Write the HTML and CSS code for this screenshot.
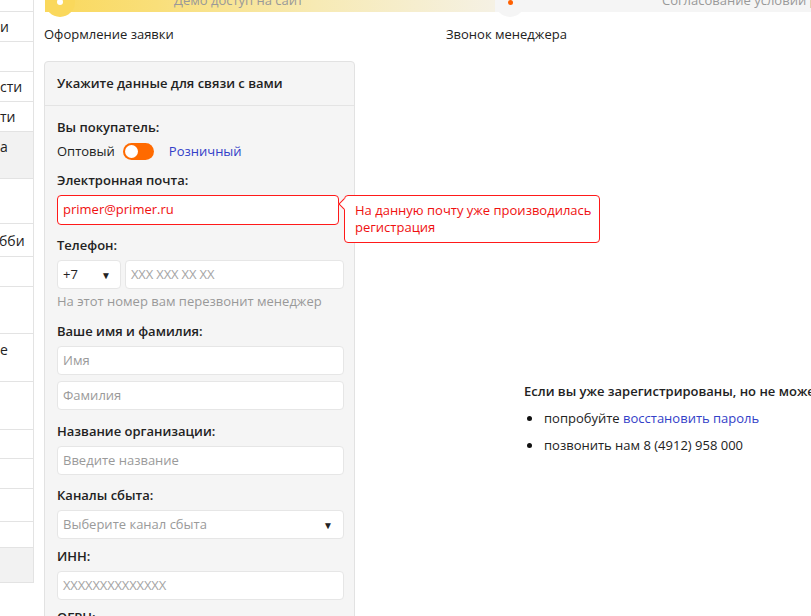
FILE: index.html
```html
<!DOCTYPE html>
<html lang="ru">
<head>
<meta charset="utf-8">
<title>Оформление заявки</title>
<link rel="stylesheet" href="styles.css">
</head>
<body>
<div class="page">
  <aside class="sidebar">
    <div class="side-row h30"></div>
    <div class="side-row h30"><span>и</span></div>
    <div class="side-row h30"></div>
    <div class="side-row h30"><span>сти</span></div>
    <div class="side-row h30"><span>ти</span></div>
    <div class="side-row h47 active"><span>а</span></div>
    <div class="side-row h45"></div>
    <div class="side-row h33"><span>бби</span></div>
    <div class="side-row h30"></div>
    <div class="side-row h47"></div>
    <div class="side-row h48"><span>е</span></div>
    <div class="side-row h48"></div>
    <div class="side-row h29"></div>
    <div class="side-row h30"></div>
    <div class="side-row h33"></div>
    <div class="side-row h26"></div>
    <div class="side-row h35 active"></div>
  </aside>

  <main class="main">
    <div class="progress">
      <div class="step step-done">
        <div class="circle circle-yellow"><span class="dot dot-white"></span></div>
        <div class="step-title step-title-1">Демо доступ на сайт</div>
      </div>
      <div class="step step-next">
        <div class="circle circle-gray"><span class="dot dot-orange"></span></div>
        <div class="step-title step-title-2">Согласование условий работы</div>
      </div>
    </div>

    <div class="step-labels">
      <div class="step-label first">Оформление заявки</div>
      <div class="step-label">Звонок менеджера</div>
    </div>

    <div class="content">
      <section class="card">
        <header class="card-head">Укажите данные для связи с вами</header>
        <div class="card-body">
          <div class="label">Вы покупатель:</div>
          <div class="switch-row">
            <span>Оптовый</span>
            <span class="toggle"><span class="knob"></span></span>
            <a class="link switch-link">Розничный</a>
          </div>

          <div class="label gap">Электронная почта:</div>
          <div class="email-wrap">
            <div class="input input-error">primer@primer.ru</div>
            <div class="tooltip">На данную почту уже производилась регистрация</div>
          </div>

          <div class="label gap">Телефон:</div>
          <div class="phone-row">
            <div class="input select phone-code"><span>+7</span><span class="arrow">▼</span></div>
            <div class="input placeholder narrow phone-num">XXX XXX XX XX</div>
          </div>
          <div class="hint">На этот номер вам перезвонит менеджер</div>

          <div class="label gap-lg">Ваше имя и фамилия:</div>
          <div class="input placeholder">Имя</div>
          <div class="input placeholder stack">Фамилия</div>

          <div class="label gap-lg">Название организации:</div>
          <div class="input placeholder">Введите название</div>

          <div class="label gap">Каналы сбыта:</div>
          <div class="input select placeholder"><span>Выберите канал сбыта</span><span class="arrow dark">▼</span></div>

          <div class="label gap-sm">ИНН:</div>
          <div class="input placeholder narrow inn">XXXXXXXXXXXXXX</div>

          <div class="label gap-sm">ОГРН:</div>
          <div class="input placeholder narrow">XXXXXXXXXXXXX</div>
        </div>
      </section>

      <section class="info">
        <div class="info-title">Если вы уже зарегистрированы, но не можете войти:</div>
        <ul class="info-list">
          <li>попробуйте <a class="link">восстановить пароль</a></li>
          <li>позвонить нам 8 (4912) 958 000</li>
        </ul>
      </section>
    </div>
  </main>
</div>
</body>
</html>
```

FILE: styles.css
```css
html {
  overflow: hidden;
}

body {
  margin: 0;
  font-family: "Open Sans", "Noto Sans", sans-serif;
  font-size: 13px;
  line-height: 18px;
  color: #222;
  background: #fff;
}

.page {
  display: flex;
  align-items: flex-start;
  width: 811px;
  height: 616px;
  overflow: hidden;
}

/* ---------- sidebar ---------- */
.sidebar {
  flex: 0 0 34px;
  width: 34px;
  margin-top: -18px;
  border-right: 1px solid #e3e3e3;
  box-sizing: border-box;
  overflow: hidden;
}

.side-row {
  box-sizing: border-box;
  border-bottom: 1px solid #e3e3e3;
  padding-top: 6px;
  font-size: 14px;
  line-height: 18px;
  color: #222;
  white-space: nowrap;
}

.side-row span {
  display: block;
  margin-left: -1px;
}

.side-row.active {
  background: #f2f2f2;
}

.h26 { height: 26px; }
.h29 { height: 29px; }
.h30 { height: 30px; }
.h33 { height: 33px; padding-top: 8px; }
.h35 { height: 35px; }
.h45 { height: 45px; }
.h47 { height: 47px; }
.h48 { height: 48px; padding-top: 7px; }

.h30 span, .h47 span, .h48 span {
  margin-left: 0;
}

/* ---------- main ---------- */
.main {
  flex: 1;
  min-width: 0;
  padding-left: 10px;
}

.progress {
  display: flex;
  height: 30px;
  margin-top: -18px;
  margin-left: 1px;
}

.step {
  display: flex;
  align-items: flex-start;
  height: 30px;
}

.step-done {
  flex: 0 0 450px;
  background: linear-gradient(90deg, #fad85c 0%, #f9df7a 25%, #f7eab4 60%, #f5f1e4 100%);
}

.step-next {
  flex: 1;
  background: #f5f5f5;
}

.circle {
  flex: 0 0 30px;
  width: 30px;
  height: 30px;
  margin-top: 5px;
  border-radius: 50%;
  display: flex;
  align-items: center;
  justify-content: center;
}

.circle-yellow {
  background: #fad85c;
}

.circle-gray {
  background: #f5f5f5;
}

.dot {
  width: 6px;
  height: 6px;
  border-radius: 50%;
}

.dot-white {
  background: #fff;
}

.dot-orange {
  width: 5px;
  height: 5px;
  background: #ff6000;
}

.step-title {
  margin-top: 3px;
  font-size: 13px;
  line-height: 30px;
  color: #999;
  white-space: nowrap;
}

.step-title-1 {
  margin-left: 99px;
}

.step-title-2 {
  margin-left: 137px;
}

.step-labels {
  display: flex;
  margin-top: 12px;
  font-size: 13px;
  line-height: 20px;
  color: #222;
}

.step-label.first {
  width: 402px;
}

.content {
  display: flex;
  align-items: flex-start;
  margin-top: 17px;
}

/* ---------- card ---------- */
.card {
  flex: 0 0 311px;
  width: 311px;
  box-sizing: border-box;
  background: #f5f5f5;
  border: 1px solid #e2e2e2;
  border-radius: 4px;
}

.card-head {
  height: 44px;
  box-sizing: border-box;
  padding: 0 12px;
  line-height: 43px;
  font-weight: 600;
  border-bottom: 1px solid #e4e4e4;
}

.card-body {
  padding: 12px 10px 12px 12px;
}

.label {
  font-weight: 600;
  line-height: 18px;
  margin-bottom: 6px;
}

.label.gap { margin-top: 11px; }
.label.gap-lg { margin-top: 12px; }
.label.gap-sm { margin-top: 8px; }

.switch-row {
  display: flex;
  align-items: center;
  height: 18px;
}

.toggle {
  position: relative;
  width: 31px;
  height: 17px;
  margin-left: 8px;
  border-radius: 9px;
  background: #ff6a00;
  display: flex;
  align-items: center;
  padding-left: 2px;
  box-sizing: border-box;
}

.knob {
  width: 13px;
  height: 13px;
  border-radius: 50%;
  background: #fff;
}

.link {
  color: #3340c8;
  text-decoration: none;
  cursor: pointer;
}

.switch-link {
  margin-left: 15px;
}

.input {
  height: 29px;
  box-sizing: border-box;
  background: #fff;
  border: 1px solid #e6e6e6;
  border-radius: 4px;
  padding: 0 5px;
  line-height: 27px;
  color: #222;
  white-space: nowrap;
}

.input.stack {
  margin-top: 6px;
}

.placeholder {
  color: #9a9a9a;
}

.narrow {
  letter-spacing: -0.15px;
  color: #a5a5a5;
}

.email-wrap {
  position: relative;
  width: 282px;
}

.input-error {
  height: 30px;
  border-color: #ff1a1a;
  color: #f01010;
  line-height: 26px;
}

.tooltip {
  position: absolute;
  left: 287px;
  top: 0;
  width: 256px;
  height: 48px;
  box-sizing: border-box;
  padding: 6px 2px 6px 10px;
  background: #fff;
  border: 1px solid #ff1a1a;
  border-radius: 4px;
  color: #f01010;
  line-height: 17px;
}

.tooltip::before {
  content: "";
  position: absolute;
  left: -5px;
  top: 4px;
  width: 7px;
  height: 7px;
  background: #fff;
  border-left: 1px solid #ff1a1a;
  border-bottom: 1px solid #ff1a1a;
  transform: rotate(45deg);
}

.phone-row {
  display: flex;
  gap: 4px;
}

.phone-code {
  flex: 0 0 64px;
  height: 29px;
}

.phone-num {
  flex: 1;
  height: 29px;
}

.select {
  display: flex;
  justify-content: space-between;
  align-items: center;
}

.arrow {
  font-size: 10px;
  line-height: 10px;
  color: #222;
  margin-right: 4px;
}

.arrow.dark {
  margin-right: 5px;
}

.hint {
  margin-top: 3px;
  color: #999;
  line-height: 18px;
}

/* ---------- info ---------- */
.info {
  margin-left: 169px;
  margin-top: 321px;
  white-space: nowrap;
}

.info-title {
  font-weight: 600;
  line-height: 18px;
}

.info-list {
  list-style: none;
  margin: 0;
  padding: 0;
}

.info-list li {
  position: relative;
  margin-top: 9px;
  padding-left: 20px;
  line-height: 18px;
}

.info-list li::before {
  content: "";
  position: absolute;
  left: 3px;
  top: 7px;
  width: 5px;
  height: 5px;
  border-radius: 50%;
  background: #111;
}
```
